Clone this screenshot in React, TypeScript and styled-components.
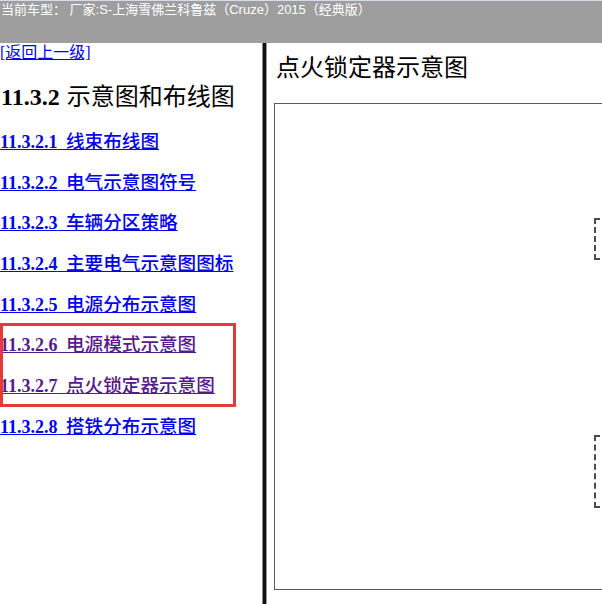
import { FC } from 'react';
import styled, { createGlobalStyle } from 'styled-components';

const GlobalStyle = createGlobalStyle`
  html, body {
    margin: 0;
    padding: 0;
    background: #ffffff;
  }
  body {
    width: 602px;
    height: 604px;
    overflow: hidden;
    font-family: "Liberation Serif", "Noto Sans CJK SC", serif;
  }
`;

const Page = styled.div`
  width: 602px;
  height: 604px;
  display: flex;
  flex-direction: column;
  overflow: hidden;
`;

const TopBar = styled.div`
  height: 43px;
  flex: none;
  background: #9e9e9e;
  border-top: 1px solid #d4dcea;
  box-sizing: border-box;
  color: #ffffff;
  font-family: "Liberation Sans", "Noto Sans CJK SC", sans-serif;
  font-size: 13px;
  line-height: 18px;
  padding-left: 1px;
  white-space: nowrap;
`;

const Body = styled.div`
  flex: 1;
  display: flex;
  min-height: 0;
`;

const LeftPane = styled.div`
  position: relative;
  width: 262px;
  flex: none;
  display: flex;
  flex-direction: column;
`;

const Divider = styled.div`
  width: 3px;
  flex: none;
  background: #111111;
  border-left: 1px solid #8a8a8a;
  border-right: 1px solid #9a9a9a;
`;

const RightPane = styled.div`
  flex: 1;
  min-width: 0;
  overflow: hidden;
  padding: 10px 0 0 7px;
  display: flex;
  flex-direction: column;
`;

const BackLink = styled.a`
  font-size: 16px;
  line-height: 20px;
  color: #0000ee;
  text-decoration: underline;
  align-self: flex-start;
`;

const Heading = styled.h2`
  margin: 20px 0 20px 1px;
  font-size: 24px;
  line-height: 28px;
  font-weight: 400;
  color: #000000;
  white-space: nowrap;
  word-spacing: 1px;
`;

const Num = styled.span`
  font-weight: 700;
`;

const Label = styled.span`
  font-size: 18.6px;
`;

const LinkList = styled.div`
  display: flex;
  flex-direction: column;
  gap: 18.7px;
`;

const TocLink = styled.a<{ $visited?: boolean }>`
  font-size: 18px;
  line-height: 22px;
  font-weight: 500;
  color: ${(p) => (p.$visited ? '#551a8b' : '#0000ee')};
  text-decoration: underline;
  white-space: nowrap;
  align-self: flex-start;
  word-spacing: 4px;
`;

const Highlight = styled.div`
  position: absolute;
  left: 0;
  top: 280px;
  width: 236px;
  height: 84px;
  box-sizing: border-box;
  border: 3px solid #e53a3a;
  pointer-events: none;
`;

const Title = styled.h3`
  margin: 0 0 20px 2px;
  font-size: 24px;
  line-height: 30px;
  font-weight: 400;
  color: #000000;
`;

const Figure = styled.div`
  position: relative;
  width: 400px;
  height: 487px;
  box-sizing: border-box;
  border: 1px solid #5a5a5a;
  flex: none;
`;

const DashedNode = styled.div<{ $top: number; $height: number }>`
  position: absolute;
  left: 319px;
  top: ${(p) => p.$top}px;
  width: 60px;
  height: ${(p) => p.$height}px;
  box-sizing: border-box;
  border: 2px dashed #4a4a4a;
`;

const links = [
  { num: '11.3.2.1', text: '线束布线图' },
  { num: '11.3.2.2', text: '电气示意图符号' },
  { num: '11.3.2.3', text: '车辆分区策略' },
  { num: '11.3.2.4', text: '主要电气示意图图标' },
  { num: '11.3.2.5', text: '电源分布示意图' },
  { num: '11.3.2.6', text: '电源模式示意图', visited: true },
  { num: '11.3.2.7', text: '点火锁定器示意图', visited: true },
  { num: '11.3.2.8', text: '搭铁分布示意图' },
];

const App: FC = () => {
  return (
    <>
      <GlobalStyle />
      <Page>
        <TopBar>当前车型： 厂家:S-上海雪佛兰科鲁兹（Cruze）2015（经典版）</TopBar>
        <Body>
          <LeftPane>
            <BackLink href="#">[返回上一级]</BackLink>
            <Heading>
              <Num>11.3.2</Num> 示意图和布线图
            </Heading>
            <LinkList>
              {links.map((l) => (
                <TocLink key={l.num} href="#" $visited={l.visited}>
                  <Num>{l.num}</Num> <Label>{l.text}</Label>
                </TocLink>
              ))}
            </LinkList>
            <Highlight />
          </LeftPane>
          <Divider />
          <RightPane>
            <Title>点火锁定器示意图</Title>
            <Figure>
              <DashedNode $top={114} $height={42} />
              <DashedNode $top={331} $height={73} />
            </Figure>
          </RightPane>
        </Body>
      </Page>
    </>
  );
};

export default App;
